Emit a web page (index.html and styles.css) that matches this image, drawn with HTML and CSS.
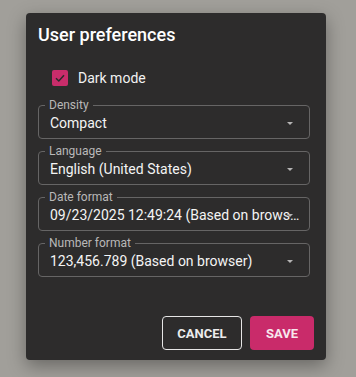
FILE: index.html
```html
<!DOCTYPE html>
<html lang="en">
<head>
    <meta charset="UTF-8">
    <meta name="viewport" content="width=device-width, initial-scale=1.0">
    <title>User preferences</title>
    <link rel="stylesheet" href="styles.css">
</head>
<body>
<div class="dialog">
    <h2 class="dialog-title">User preferences</h2>

    <label class="check-row">
        <span class="checkbox">
            <svg width="12" height="12" viewBox="0 0 12 12"><path d="M2 6.2 L4.8 9 L10 3.2" fill="none" stroke="#2b2a2a" stroke-width="1.5"/></svg>
        </span>
        <span>Dark mode</span>
    </label>

    <fieldset class="field">
        <legend>Density</legend>
        <div class="value">Compact</div>
        <span class="arrow"></span>
    </fieldset>

    <fieldset class="field">
        <legend>Language</legend>
        <div class="value">English (United States)</div>
        <span class="arrow"></span>
    </fieldset>

    <fieldset class="field">
        <legend>Date format</legend>
        <div class="value">09/23/2025 12:49:24 (Based on browser)</div>
        <span class="arrow"></span>
    </fieldset>

    <fieldset class="field">
        <legend>Number format</legend>
        <div class="value">123,456.789 (Based on browser)</div>
        <span class="arrow"></span>
    </fieldset>

    <div class="actions">
        <button class="btn btn-outline">Cancel</button>
        <button class="btn btn-primary">Save</button>
    </div>
</div>
</body>
</html>
```

FILE: styles.css
```css
body {
    font-family: 'Roboto', sans-serif;
    margin: 0;
    padding: 13px 0 0 26px;
    background-color: #a19f9a;
    height: 377px;
    box-sizing: border-box;
    overflow: hidden;
}
.dialog {
    width: 300px;
    height: 347px;
    box-sizing: border-box;
    padding: 10px 12px 10px 12px;
    background-color: #2d2c2c;
    border-radius: 4px;
    box-shadow: 0 6px 18px rgba(0, 0, 0, 0.35);
    color: #f2f2f2;
    display: flex;
    flex-direction: column;
}
.dialog-title {
    margin: 0;
    font-size: 18px;
    font-weight: 500;
    line-height: 24px;
    color: #ffffff;
}
.check-row {
    display: flex;
    align-items: center;
    gap: 10px;
    margin: 21px 0 10px 14px;
    font-size: 14px;
    line-height: 20px;
}
.checkbox {
    width: 16px;
    height: 16px;
    border-radius: 2px;
    background-color: #c92d6b;
    display: flex;
    align-items: center;
    justify-content: center;
}
.field {
    position: relative;
    margin: 0 4px 5px 0;
    padding: 0 8px 5px 11px;
    border: 1px solid #666565;
    border-radius: 4px;
    min-width: 0;
}
.field legend {
    font-size: 12px;
    line-height: 14px;
    color: #b9b8b8;
    padding: 0 4px;
    margin-left: -5px;
}
.value {
    padding-top: 1px;
    font-size: 14px;
    line-height: 20px;
    color: #f4f4f4;
    white-space: nowrap;
    overflow: hidden;
    text-overflow: ellipsis;
}
.arrow {
    position: absolute;
    right: 16px;
    top: 10px;
    width: 0;
    height: 0;
    border-left: 3.5px solid transparent;
    border-right: 3.5px solid transparent;
    border-top: 3.5px solid #b5b4b4;
}
.actions {
    margin-top: auto;
    display: flex;
    justify-content: flex-end;
    gap: 8px;
}
.btn {
    font-family: 'Roboto', sans-serif;
    font-size: 13px;
    font-weight: 700;
    text-transform: uppercase;
    height: 34px;
    border-radius: 4px;
    cursor: pointer;
}
.btn-outline {
    width: 80px;
    background: transparent;
    border: 1px solid #e6e6e6;
    color: #ececec;
}
.btn-primary {
    width: 64px;
    border: none;
    background-color: #c92b6a;
    color: #f7e7ee;
}
```
